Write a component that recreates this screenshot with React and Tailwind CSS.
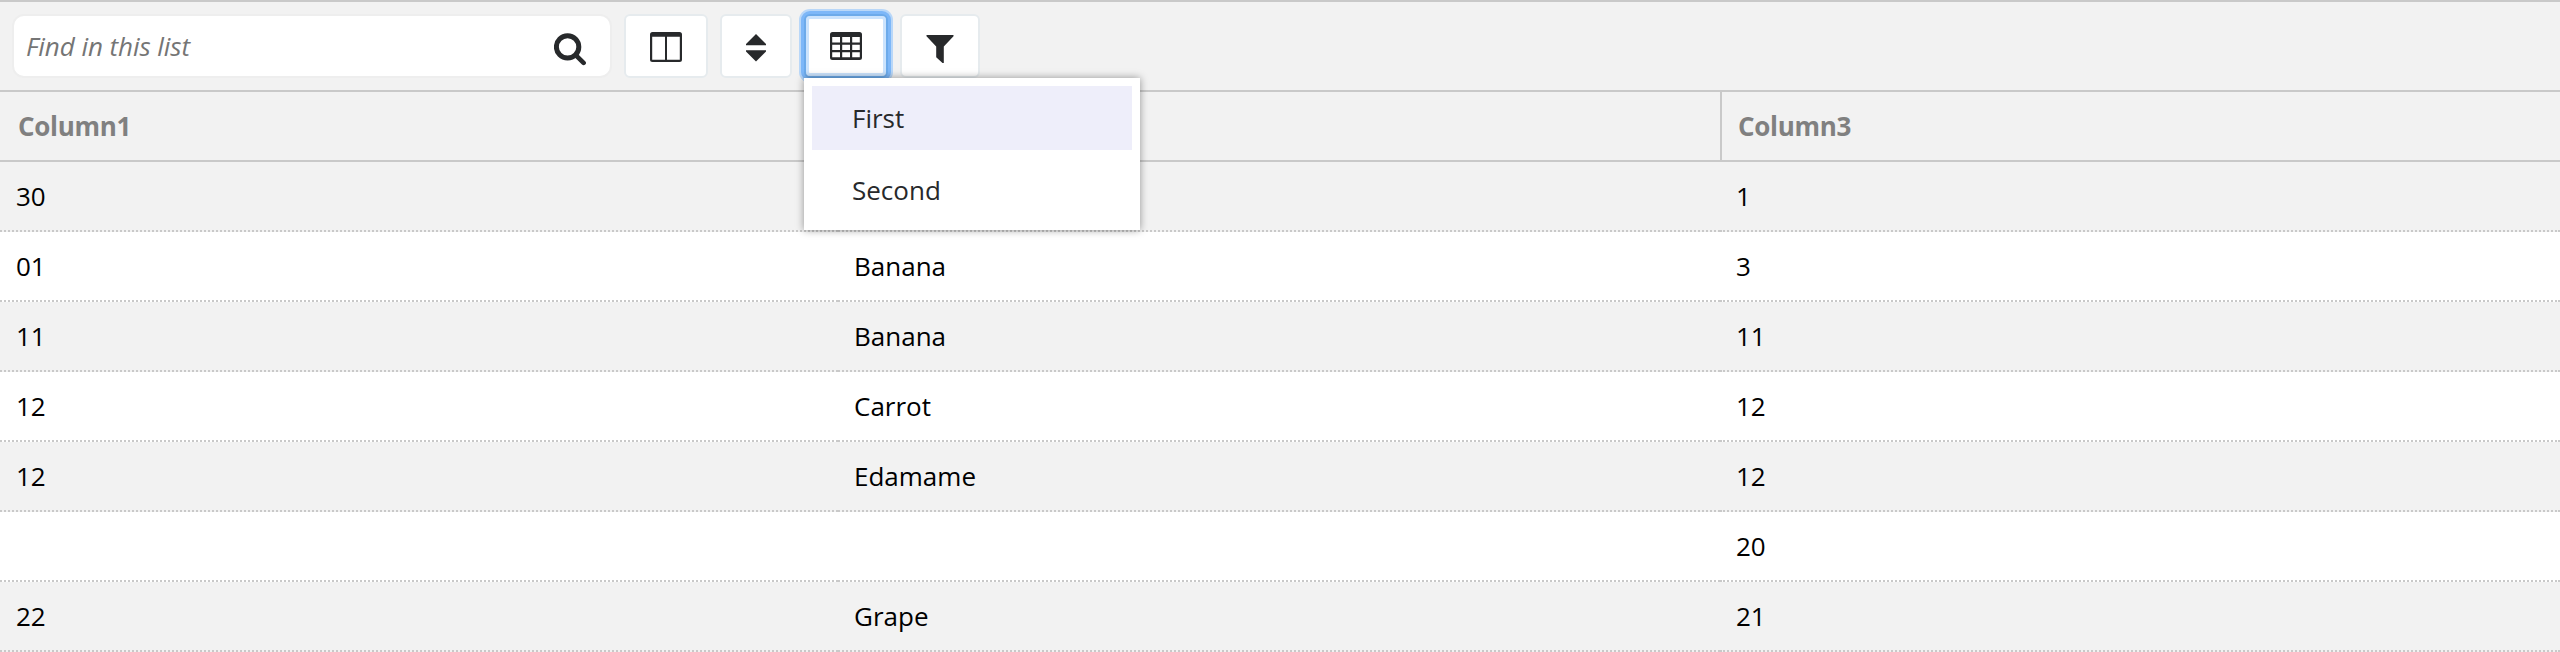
const rows = [
  ['30', '', '1'],
  ['01', 'Banana', '3'],
  ['11', 'Banana', '11'],
  ['12', 'Carrot', '12'],
  ['12', 'Edamame', '12'],
  ['', '', '20'],
  ['22', 'Grape', '21'],
];

const grid = 'grid grid-cols-[838px_882px_840px]';

function SearchIcon() {
  return (
    <svg className="mt-1.5 h-[33px] w-8" viewBox="0 0 32 33" fill="none" stroke="#27292b">
      <circle cx="13.6" cy="13.9" r="11.2" strokeWidth="5" />
      <path d="M22 22.3L29.6 29.9" strokeWidth="4.6" strokeLinecap="round" />
    </svg>
  );
}

function ColumnsIcon() {
  return (
    <svg className="mt-0.5 h-[30px] w-8" viewBox="0 0 32 30" fill="#27292b">
      <path fillRule="evenodd" d="M2.5 0H29.5A2.5 2.5 0 0 1 32 2.5V27.5A2.5 2.5 0 0 1 29.5 30H2.5A2.5 2.5 0 0 1 0 27.5V2.5A2.5 2.5 0 0 1 2.5 0ZM2.2 4.8V27.8H15V4.8ZM17 4.8V27.8H29.8V4.8Z" />
    </svg>
  );
}

function SortIcon() {
  return (
    <svg className="mt-1 h-7 w-5" viewBox="0 0 20 28" fill="#27292b">
      <path d="M10 0L20 10V11.2H0V10ZM10 27.4L20 17.4V16.2H0V17.4Z" />
    </svg>
  );
}

function TableIcon() {
  return (
    <svg className="h-7 w-8" viewBox="0 0 32 28" fill="#27292b">
      <path fillRule="evenodd" d="M2.5 0H29.5A2.5 2.5 0 0 1 32 2.5V25.5A2.5 2.5 0 0 1 29.5 28H2.5A2.5 2.5 0 0 1 0 25.5V2.5A2.5 2.5 0 0 1 2.5 0ZM2.2 5V10.5H10V5ZM12.2 5V10.5H20V5ZM22.2 5V10.5H29.8V5ZM2.2 12.7V18H10V12.7ZM12.2 12.7V18H20V12.7ZM22.2 12.7V18H29.8V12.7ZM2.2 20.2V25.3H10V20.2ZM12.2 20.2V25.3H20V20.2ZM22.2 20.2V25.3H29.8V20.2Z" />
    </svg>
  );
}

function FilterIcon() {
  return (
    <svg className="mt-[5px] h-7 w-7" viewBox="0 0 28 28" fill="#27292b">
      <path d="M0.5 0H27.5V1.3L17.8 11.5V28H16.5L10.2 22.3V11.5L0.5 1.3Z" />
    </svg>
  );
}

const button = 'flex h-16 items-center justify-center rounded-md border-2 border-[#e6ebee] bg-white';

export default function App() {
  return (
    <div className="h-[652px] w-[2560px] overflow-hidden bg-white font-['Open_Sans',sans-serif] text-[26px] leading-9 text-black">
      <div className="flex h-[92px] items-start gap-3 border-y-2 border-[#c9c9c9] bg-[#f2f2f2] pt-3 pl-3">
        <div className="flex h-16 w-[600px] items-center justify-between rounded-xl border-2 border-[#eeeeee] bg-white pr-6 pl-3">
          <span className="tracking-[-0.06px] text-[#757575] italic">Find in this list</span>
          <SearchIcon />
        </div>
        <button className={`${button} w-[84px]`}><ColumnsIcon /></button>
        <button className={`${button} w-[72px]`}><SortIcon /></button>
        <div className="relative">
          <button className="flex h-16 w-[84px] items-center justify-center rounded-md border-2 border-[#6caaea] bg-white shadow-[0_0_0_3px_#7db7f8,0_0_0_5px_#b9d7f8,inset_0_0_0_3px_#cbe3fd]"><TableIcon /></button>
          <div className="absolute top-16 left-0 z-10 h-[152px] w-[336px] bg-white p-2 text-[#27292b] shadow-[0_0_8px_rgba(0,0,0,0.4)]">
            <div className="flex h-16 items-center bg-[#eeeefa] pl-10">First</div>
            <div className="mt-2 flex h-16 items-center pl-10">Second</div>
          </div>
        </div>
        <button className={`${button} w-20`}><FilterIcon /></button>
      </div>
      <div className={`${grid} h-[70px] border-b-2 border-[#c9c9c9] bg-[#f2f2f2] font-bold tracking-[-0.3px] text-[#808080]`}>
        <div className="flex items-center pl-[18px]">Column1</div>
        <div />
        <div className="flex items-center border-l-2 border-[#c9c9c9] pl-4">Column3</div>
      </div>
      {rows.map((row, r) => (
        <div key={r} className={`${grid} h-[70px] ${r % 2 ? 'bg-white' : 'bg-[#f2f2f2]'}`}>
          {row.map((cell, c) => (
            <div key={c} className="flex items-center border-b-2 border-dotted border-[#c9c9c9] pl-4">{cell}</div>
          ))}
        </div>
      ))}
    </div>
  );
}
